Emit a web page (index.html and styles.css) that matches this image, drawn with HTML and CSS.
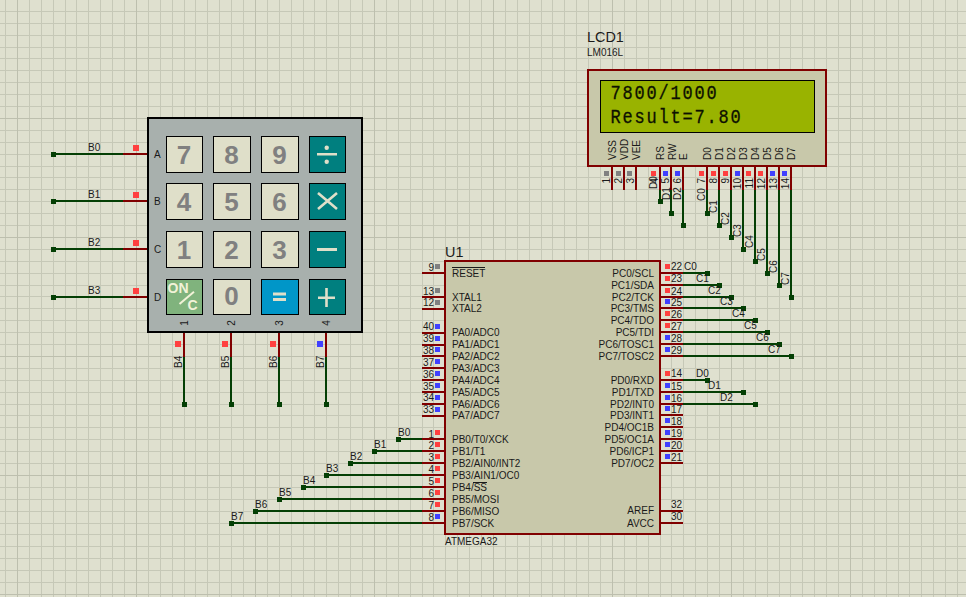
FILE: index.html
```html
<!DOCTYPE html>
<html lang="en">
<head>
<meta charset="utf-8">
<title>Proteus schematic: ATMEGA32 calculator</title>
<link rel="stylesheet" href="styles.css">
</head>
<body>
<main class="sheet">
<svg class="schematic" width="966" height="597" viewBox="0 0 966 597" xmlns="http://www.w3.org/2000/svg">
  <defs>
    <pattern id="grid" patternUnits="userSpaceOnUse" x="17" y="-1" width="119" height="119">
      <path class="grid-minor" d="M12 0V119M24 0V119M36 0V119M48 0V119M59 0V119M71 0V119M83 0V119M95 0V119M107 0V119M0 12H119M0 24H119M0 36H119M0 48H119M0 59H119M0 71H119M0 83H119M0 95H119M0 107H119"/>
      <path class="grid-major" d="M0 0V119M0 0H119"/>
    </pattern>
  </defs>
  <rect class="grid-fill" width="966" height="597"/>

  <!-- wires -->
  <path class="wire" d="M53 154H123M53 201H123M53 249H123M53 297H123M184 357V404M231 357V404M279 357V404M326 357V404
    M660 190V201M671 190V213M683 190V225M707 190V213M719 190V225M731 190V237M743 190V249M755 190V261M767 190V273M779 190V285M791 190V297
    M398 439H422M374 451H422M350 463H422M326 475H422M303 487H422M279 499H422M255 511H422M231 523H422
    M683 273H707M683 285H719M683 297H731M683 308H743M683 320H755M683 332H767M683 344H779M683 356H791M683 380H707M683 392H743M683 404H755"/>
  <path class="junction" d="M51 152h5v5h-5zM51 199h5v5h-5zM51 247h5v5h-5zM51 295h5v5h-5z
    M182 402h5v5h-5zM229 402h5v5h-5zM277 402h5v5h-5zM324 402h5v5h-5z
    M658 199h5v5h-5zM669 211h5v5h-5zM681 223h5v5h-5zM705 211h5v5h-5zM717 223h5v5h-5zM729 235h5v5h-5zM741 247h5v5h-5zM753 259h5v5h-5zM765 271h5v5h-5zM777 283h5v5h-5zM789 295h5v5h-5z
    M396 437h5v5h-5zM372 449h5v5h-5zM348 461h5v5h-5zM324 473h5v5h-5zM301 485h5v5h-5zM277 497h5v5h-5zM253 509h5v5h-5zM229 521h5v5h-5z
    M705 271h5v5h-5zM717 283h5v5h-5zM729 295h5v5h-5zM741 306h5v5h-5zM753 318h5v5h-5zM765 330h5v5h-5zM777 342h5v5h-5zM789 354h5v5h-5zM705 378h5v5h-5zM741 390h5v5h-5zM753 402h5v5h-5z"/>

  <!-- pins -->
  <path class="pin" d="M123 154H148M123 201H148M123 249H148M123 297H148M184 333V357M231 333V357M279 333V357M326 333V357
    M612 166V190M624 166V190M636 166V190M660 166V190M671 166V190M683 166V190M707 166V190M719 166V190M731 166V190M743 166V190M755 166V190M767 166V190M779 166V190M791 166V190
    M422 273H445M422 297H445M422 309H445M422 333H445M422 345H445M422 356H445M422 368H445M422 380H445M422 392H445M422 404H445M422 416H445
    M422 439H445M422 451H445M422 463H445M422 475H445M422 487H445M422 499H445M422 511H445M422 523H445
    M660 273H683M660 285H683M660 297H683M660 308H683M660 320H683M660 332H683M660 344H683M660 356H683
    M660 380H683M660 392H683M660 404H683M660 415H683M660 427H683M660 439H683M660 451H683M660 463H683M660 511H683M660 523H683"/>

  <!-- pin state markers -->
  <path class="state-high" d="M133 145h6v6h-6zM133 192h6v6h-6zM133 240h6v6h-6zM133 288h6v6h-6zM175 341h6v6h-6zM222 341h6v6h-6zM270 341h6v6h-6z
    M651 171h5v5h-5zM699 171h5v5h-5zM711 171h5v5h-5zM723 171h5v5h-5zM746 171h5v5h-5zM758 171h5v5h-5z
    M435 430h5v5h-5zM435 442h5v5h-5zM435 454h5v5h-5zM435 466h5v5h-5zM435 478h5v5h-5zM435 490h5v5h-5zM435 502h5v5h-5z
    M665 264h5v5h-5zM665 276h5v5h-5zM665 288h5v5h-5zM665 311h5v5h-5zM665 323h5v5h-5zM665 371h5v5h-5z"/>
  <path class="state-low" d="M317 341h6v6h-6zM663 171h5v5h-5zM675 171h5v5h-5zM735 171h5v5h-5zM770 171h5v5h-5zM782 171h5v5h-5z
    M435 324h5v5h-5zM435 336h5v5h-5zM435 347h5v5h-5zM435 359h5v5h-5zM435 371h5v5h-5zM435 383h5v5h-5zM435 395h5v5h-5zM435 407h5v5h-5zM435 514h5v5h-5z
    M665 299h5v5h-5zM665 335h5v5h-5zM665 347h5v5h-5zM665 383h5v5h-5zM665 395h5v5h-5zM665 406h5v5h-5zM665 418h5v5h-5zM665 430h5v5h-5zM665 442h5v5h-5zM665 454h5v5h-5z"/>
  <path class="state-off" d="M604 171h5v5h-5zM616 171h5v5h-5zM627 171h5v5h-5zM435 264h5v5h-5zM435 288h5v5h-5zM435 300h5v5h-5z"/>

  <!-- keypad -->
  <rect class="keypad-body" x="148" y="118" width="214" height="214"/>
  <rect class="key" x="166.5" y="136.5" width="36" height="36"/>
  <rect class="key" x="213.5" y="136.5" width="37" height="36"/>
  <rect class="key" x="261.5" y="136.5" width="37" height="36"/>
  <rect class="key key-op" x="309.5" y="136.5" width="36" height="36"/>
  <rect class="key" x="166.5" y="183.5" width="36" height="36"/>
  <rect class="key" x="213.5" y="183.5" width="37" height="36"/>
  <rect class="key" x="261.5" y="183.5" width="37" height="36"/>
  <rect class="key key-op" x="309.5" y="183.5" width="36" height="36"/>
  <rect class="key" x="166.5" y="231.5" width="36" height="36"/>
  <rect class="key" x="213.5" y="231.5" width="37" height="36"/>
  <rect class="key" x="261.5" y="231.5" width="37" height="36"/>
  <rect class="key key-op" x="309.5" y="231.5" width="36" height="36"/>
  <rect class="key key-on" x="166.5" y="279.5" width="36" height="35"/>
  <rect class="key" x="213.5" y="279.5" width="37" height="35"/>
  <rect class="key key-eq" x="261.5" y="279.5" width="37" height="35"/>
  <rect class="key key-op" x="309.5" y="279.5" width="36" height="35"/>

  <text class="digit" x="184" y="164">7</text>
  <text class="digit" x="231.5" y="164">8</text>
  <text class="digit" x="279.5" y="164">9</text>
  <text class="digit" x="184" y="211">4</text>
  <text class="digit" x="231.5" y="211">5</text>
  <text class="digit" x="279.5" y="211">6</text>
  <text class="digit" x="184" y="259">1</text>
  <text class="digit" x="231.5" y="259">2</text>
  <text class="digit" x="279.5" y="259">3</text>
  <text class="digit" x="231.5" y="305">0</text>

  <path class="glyph-fill" d="M317 153h20v2.5h-20zM317 248h20v3h-20zM273 292.500h13v3h-13zM273 298h13v3h-13z"/>
  <circle class="glyph-fill" cx="326.700" cy="147.700" r="2.200"/>
  <circle class="glyph-fill" cx="326.700" cy="161.700" r="2.200"/>
  <path class="glyph-stroke" d="M318 193L337 209M337 193L318 209M318 297.700H335M326.500 288V307"/>
  <path class="glyph-thin" d="M179.500 304L194 291.700"/>
  <text class="on-label" x="167.500" y="293">ON</text>
  <text class="on-label" x="187.500" y="310">C</text>

  <text class="lbl" x="154" y="158">A</text>
  <text class="lbl" x="154" y="205">B</text>
  <text class="lbl" x="154" y="253">C</text>
  <text class="lbl" x="154" y="301">D</text>
  <text class="lbl mid" transform="rotate(-90 188 323)" x="188" y="323">1</text>
  <text class="lbl mid" transform="rotate(-90 235 323)" x="235" y="323">2</text>
  <text class="lbl mid" transform="rotate(-90 283 323)" x="283" y="323">3</text>
  <text class="lbl mid" transform="rotate(-90 330 323)" x="330" y="323">4</text>

  <text class="lbl" x="88" y="151">B0</text>
  <text class="lbl" x="88" y="198">B1</text>
  <text class="lbl" x="88" y="246">B2</text>
  <text class="lbl" x="88" y="294">B3</text>
  <text class="lbl" transform="rotate(-90 181.500 368)" x="181.500" y="368">B4</text>
  <text class="lbl" transform="rotate(-90 228.500 368)" x="228.500" y="368">B5</text>
  <text class="lbl" transform="rotate(-90 276.500 368)" x="276.500" y="368">B6</text>
  <text class="lbl" transform="rotate(-90 323.500 368)" x="323.500" y="368">B7</text>

  <!-- LCD -->
  <text class="title" x="587" y="42">LCD1</text>
  <text class="lbl" x="587" y="56">LM016L</text>
  <rect class="chip" x="588" y="70" width="238" height="96"/>
  <rect class="lcd-screen" x="600.500" y="80.500" width="214" height="52"/>
  <text class="lcd-text" transform="translate(610.500 99) scale(.85 1)">7800/1000</text>
  <text class="lcd-text" transform="translate(610.500 123) scale(.85 1)">Result=7.80</text>

  <text class="lbl" transform="rotate(-90 616 160)" x="616" y="160">VSS</text>
  <text class="lbl" transform="rotate(-90 628 160)" x="628" y="160">VDD</text>
  <text class="lbl" transform="rotate(-90 640 160)" x="640" y="160">VEE</text>
  <text class="lbl" transform="rotate(-90 664 160)" x="664" y="160">RS</text>
  <text class="lbl" transform="rotate(-90 675.500 160)" x="675.500" y="160">RW</text>
  <text class="lbl" transform="rotate(-90 687 160)" x="687" y="160">E</text>
  <text class="lbl" transform="rotate(-90 711 160)" x="711" y="160">D0</text>
  <text class="lbl" transform="rotate(-90 723 160)" x="723" y="160">D1</text>
  <text class="lbl" transform="rotate(-90 735 160)" x="735" y="160">D2</text>
  <text class="lbl" transform="rotate(-90 747 160)" x="747" y="160">D3</text>
  <text class="lbl" transform="rotate(-90 759 160)" x="759" y="160">D4</text>
  <text class="lbl" transform="rotate(-90 771 160)" x="771" y="160">D5</text>
  <text class="lbl" transform="rotate(-90 783 160)" x="783" y="160">D6</text>
  <text class="lbl" transform="rotate(-90 795 160)" x="795" y="160">D7</text>

  <text class="lbl end" transform="rotate(-90 610 178)" x="610" y="178">1</text>
  <text class="lbl end" transform="rotate(-90 622 178)" x="622" y="178">2</text>
  <text class="lbl end" transform="rotate(-90 634 178)" x="634" y="178">3</text>
  <text class="lbl end" transform="rotate(-90 658 178)" x="658" y="178">4</text>
  <text class="lbl end" transform="rotate(-90 669 178)" x="669" y="178">5</text>
  <text class="lbl end" transform="rotate(-90 681 178)" x="681" y="178">6</text>
  <text class="lbl end" transform="rotate(-90 705 178)" x="705" y="178">7</text>
  <text class="lbl end" transform="rotate(-90 717 178)" x="717" y="178">8</text>
  <text class="lbl end" transform="rotate(-90 729 178)" x="729" y="178">9</text>
  <text class="lbl end" transform="rotate(-90 741 178)" x="741" y="178">10</text>
  <text class="lbl end" transform="rotate(-90 753 178)" x="753" y="178">11</text>
  <text class="lbl end" transform="rotate(-90 765 178)" x="765" y="178">12</text>
  <text class="lbl end" transform="rotate(-90 777 178)" x="777" y="178">13</text>
  <text class="lbl end" transform="rotate(-90 789 178)" x="789" y="178">14</text>

  <text class="lbl" transform="rotate(-90 656.500 189)" x="656.500" y="189">D0</text>
  <text class="lbl" transform="rotate(-90 670 200)" x="670" y="200">D1</text>
  <text class="lbl" transform="rotate(-90 681 200)" x="681" y="200">D2</text>
  <text class="lbl" transform="rotate(-90 705 201)" x="705" y="201">C0</text>
  <text class="lbl" transform="rotate(-90 717 213)" x="717" y="213">C1</text>
  <text class="lbl" transform="rotate(-90 729 225)" x="729" y="225">C2</text>
  <text class="lbl" transform="rotate(-90 741 237)" x="741" y="237">C3</text>
  <text class="lbl" transform="rotate(-90 753 248)" x="753" y="248">C4</text>
  <text class="lbl" transform="rotate(-90 765 261)" x="765" y="261">C5</text>
  <text class="lbl" transform="rotate(-90 777 273)" x="777" y="273">C6</text>
  <text class="lbl" transform="rotate(-90 789 285)" x="789" y="285">C7</text>

  <!-- ATMEGA32 -->
  <text class="title" x="445" y="257">U1</text>
  <rect class="chip" x="445" y="261" width="215" height="273"/>
  <text class="lbl" x="445" y="545">ATMEGA32</text>
  <path class="overbar" d="M452 267.500H485M473 482.500H487"/>

  <text class="lbl" x="452" y="277">RESET</text>
  <text class="lbl" x="452" y="301">XTAL1</text>
  <text class="lbl" x="452" y="312">XTAL2</text>
  <text class="lbl" x="452" y="336">PA0/ADC0</text>
  <text class="lbl" x="452" y="348">PA1/ADC1</text>
  <text class="lbl" x="452" y="360">PA2/ADC2</text>
  <text class="lbl" x="452" y="372">PA3/ADC3</text>
  <text class="lbl" x="452" y="384">PA4/ADC4</text>
  <text class="lbl" x="452" y="396">PA5/ADC5</text>
  <text class="lbl" x="452" y="408">PA6/ADC6</text>
  <text class="lbl" x="452" y="419">PA7/ADC7</text>
  <text class="lbl" x="452" y="443">PB0/T0/XCK</text>
  <text class="lbl" x="452" y="455">PB1/T1</text>
  <text class="lbl" x="452" y="467">PB2/AIN0/INT2</text>
  <text class="lbl" x="452" y="479">PB3/AIN1/OC0</text>
  <text class="lbl" x="452" y="491">PB4/SS</text>
  <text class="lbl" x="452" y="503">PB5/MOSI</text>
  <text class="lbl" x="452" y="515">PB6/MISO</text>
  <text class="lbl" x="452" y="527">PB7/SCK</text>

  <text class="lbl end" x="654" y="277">PC0/SCL</text>
  <text class="lbl end" x="654" y="289">PC1/SDA</text>
  <text class="lbl end" x="654" y="301">PC2/TCK</text>
  <text class="lbl end" x="654" y="312">PC3/TMS</text>
  <text class="lbl end" x="654" y="324">PC4/TDO</text>
  <text class="lbl end" x="654" y="336">PC5/TDI</text>
  <text class="lbl end" x="654" y="348">PC6/TOSC1</text>
  <text class="lbl end" x="654" y="360">PC7/TOSC2</text>
  <text class="lbl end" x="654" y="384">PD0/RXD</text>
  <text class="lbl end" x="654" y="396">PD1/TXD</text>
  <text class="lbl end" x="654" y="408">PD2/INT0</text>
  <text class="lbl end" x="654" y="419">PD3/INT1</text>
  <text class="lbl end" x="654" y="431">PD4/OC1B</text>
  <text class="lbl end" x="654" y="443">PD5/OC1A</text>
  <text class="lbl end" x="654" y="455">PD6/ICP1</text>
  <text class="lbl end" x="654" y="467">PD7/OC2</text>
  <text class="lbl end" x="654" y="514">AREF</text>
  <text class="lbl end" x="654" y="527">AVCC</text>

  <text class="lbl end" x="434" y="271">9</text>
  <text class="lbl end" x="434" y="295">13</text>
  <text class="lbl end" x="434" y="306">12</text>
  <text class="lbl end" x="434" y="330">40</text>
  <text class="lbl end" x="434" y="342">39</text>
  <text class="lbl end" x="434" y="354">38</text>
  <text class="lbl end" x="434" y="366">37</text>
  <text class="lbl end" x="434" y="378">36</text>
  <text class="lbl end" x="434" y="390">35</text>
  <text class="lbl end" x="434" y="401">34</text>
  <text class="lbl end" x="434" y="413">33</text>
  <text class="lbl end" x="434" y="438">1</text>
  <text class="lbl end" x="434" y="449">2</text>
  <text class="lbl end" x="434" y="461">3</text>
  <text class="lbl end" x="434" y="473">4</text>
  <text class="lbl end" x="434" y="485">5</text>
  <text class="lbl end" x="434" y="497">6</text>
  <text class="lbl end" x="434" y="509">7</text>
  <text class="lbl end" x="434" y="521">8</text>

  <text class="lbl" x="671" y="270">22</text>
  <text class="lbl" x="671" y="282">23</text>
  <text class="lbl" x="671" y="295">24</text>
  <text class="lbl" x="671" y="306">25</text>
  <text class="lbl" x="671" y="318">26</text>
  <text class="lbl" x="671" y="330">27</text>
  <text class="lbl" x="671" y="342">28</text>
  <text class="lbl" x="671" y="354">29</text>
  <text class="lbl" x="671" y="377">14</text>
  <text class="lbl" x="671" y="390">15</text>
  <text class="lbl" x="671" y="402">16</text>
  <text class="lbl" x="671" y="413">17</text>
  <text class="lbl" x="671" y="425">18</text>
  <text class="lbl" x="671" y="437">19</text>
  <text class="lbl" x="671" y="449">20</text>
  <text class="lbl" x="671" y="461">21</text>
  <text class="lbl" x="671" y="508">32</text>
  <text class="lbl" x="671" y="520">30</text>

  <text class="lbl" x="398" y="436">B0</text>
  <text class="lbl" x="374" y="448">B1</text>
  <text class="lbl" x="350" y="460">B2</text>
  <text class="lbl" x="326" y="472">B3</text>
  <text class="lbl" x="303" y="484">B4</text>
  <text class="lbl" x="279" y="496">B5</text>
  <text class="lbl" x="255" y="508">B6</text>
  <text class="lbl" x="231" y="520">B7</text>

  <text class="lbl" x="684" y="270">C0</text>
  <text class="lbl" x="696" y="282">C1</text>
  <text class="lbl" x="708" y="294">C2</text>
  <text class="lbl" x="720" y="305">C3</text>
  <text class="lbl" x="732" y="317">C4</text>
  <text class="lbl" x="744" y="329">C5</text>
  <text class="lbl" x="756" y="341">C6</text>
  <text class="lbl" x="768" y="353">C7</text>
  <text class="lbl" x="696" y="377">D0</text>
  <text class="lbl" x="708" y="389">D1</text>
  <text class="lbl" x="720" y="401">D2</text>
</svg>
</main>
</body>
</html>
```

FILE: styles.css
```css
html, body {
  margin: 0;
  padding: 0;
  background: #dfe0cf;
}

.sheet {
  width: 966px;
  height: 597px;
  overflow: hidden;
}

.schematic {
  display: block;
  font-family: "Liberation Sans", Arial, sans-serif;
}

.grid-fill { fill: url(#grid); }
.grid-minor { fill: none; stroke: #c6c8b7; stroke-width: 1; shape-rendering: crispEdges; }
.grid-major { fill: none; stroke: #bdbfae; stroke-width: 2; shape-rendering: crispEdges; }

.wire { fill: none; stroke: #043f04; stroke-width: 2; shape-rendering: crispEdges; }
.pin { fill: none; stroke: #800000; stroke-width: 2; shape-rendering: crispEdges; }
.junction { fill: #043f04; shape-rendering: crispEdges; }
.state-high { fill: #ff4040; shape-rendering: crispEdges; }
.state-low { fill: #4040ff; shape-rendering: crispEdges; }
.state-off { fill: #808080; shape-rendering: crispEdges; }

.keypad-body { fill: #a8b0ad; stroke: #000; stroke-width: 2; shape-rendering: crispEdges; }
.key { fill: #dfdfc9; stroke: #000; stroke-width: 1; shape-rendering: crispEdges; }
.key-op { fill: #007f7f; }
.key-eq { fill: #0096c8; }
.key-on { fill: #80b37d; }

.digit {
  font-size: 26px;
  font-weight: 700;
  fill: #808080;
  text-anchor: middle;
}

.glyph-fill { fill: #dfdfc9; }
.glyph-stroke { fill: none; stroke: #dfdfc9; stroke-width: 2.6; }
.glyph-thin { fill: none; stroke: #f2f2d8; stroke-width: 2; }
.on-label { font-size: 14px; font-weight: 700; fill: #f2f2d8; }

.lbl { font-size: 10px; fill: #1a1a1a; }
.end { text-anchor: end; }
.mid { text-anchor: middle; }
.title { font-size: 14.4px; fill: #1a1a1a; }
.overbar { fill: none; stroke: #1a1a1a; stroke-width: 1; shape-rendering: crispEdges; }

.chip { fill: #c8c8aa; stroke: #800000; stroke-width: 2; shape-rendering: crispEdges; }
.lcd-screen { fill: #99b300; stroke: #000; stroke-width: 1; shape-rendering: crispEdges; }
.lcd-text {
  font-family: "Liberation Mono", "DejaVu Sans Mono", monospace;
  font-size: 20px;
  letter-spacing: 2.12px;
  fill: #0c1000;
  stroke: #0c1000;
  stroke-width: 0.3px;
}
```
